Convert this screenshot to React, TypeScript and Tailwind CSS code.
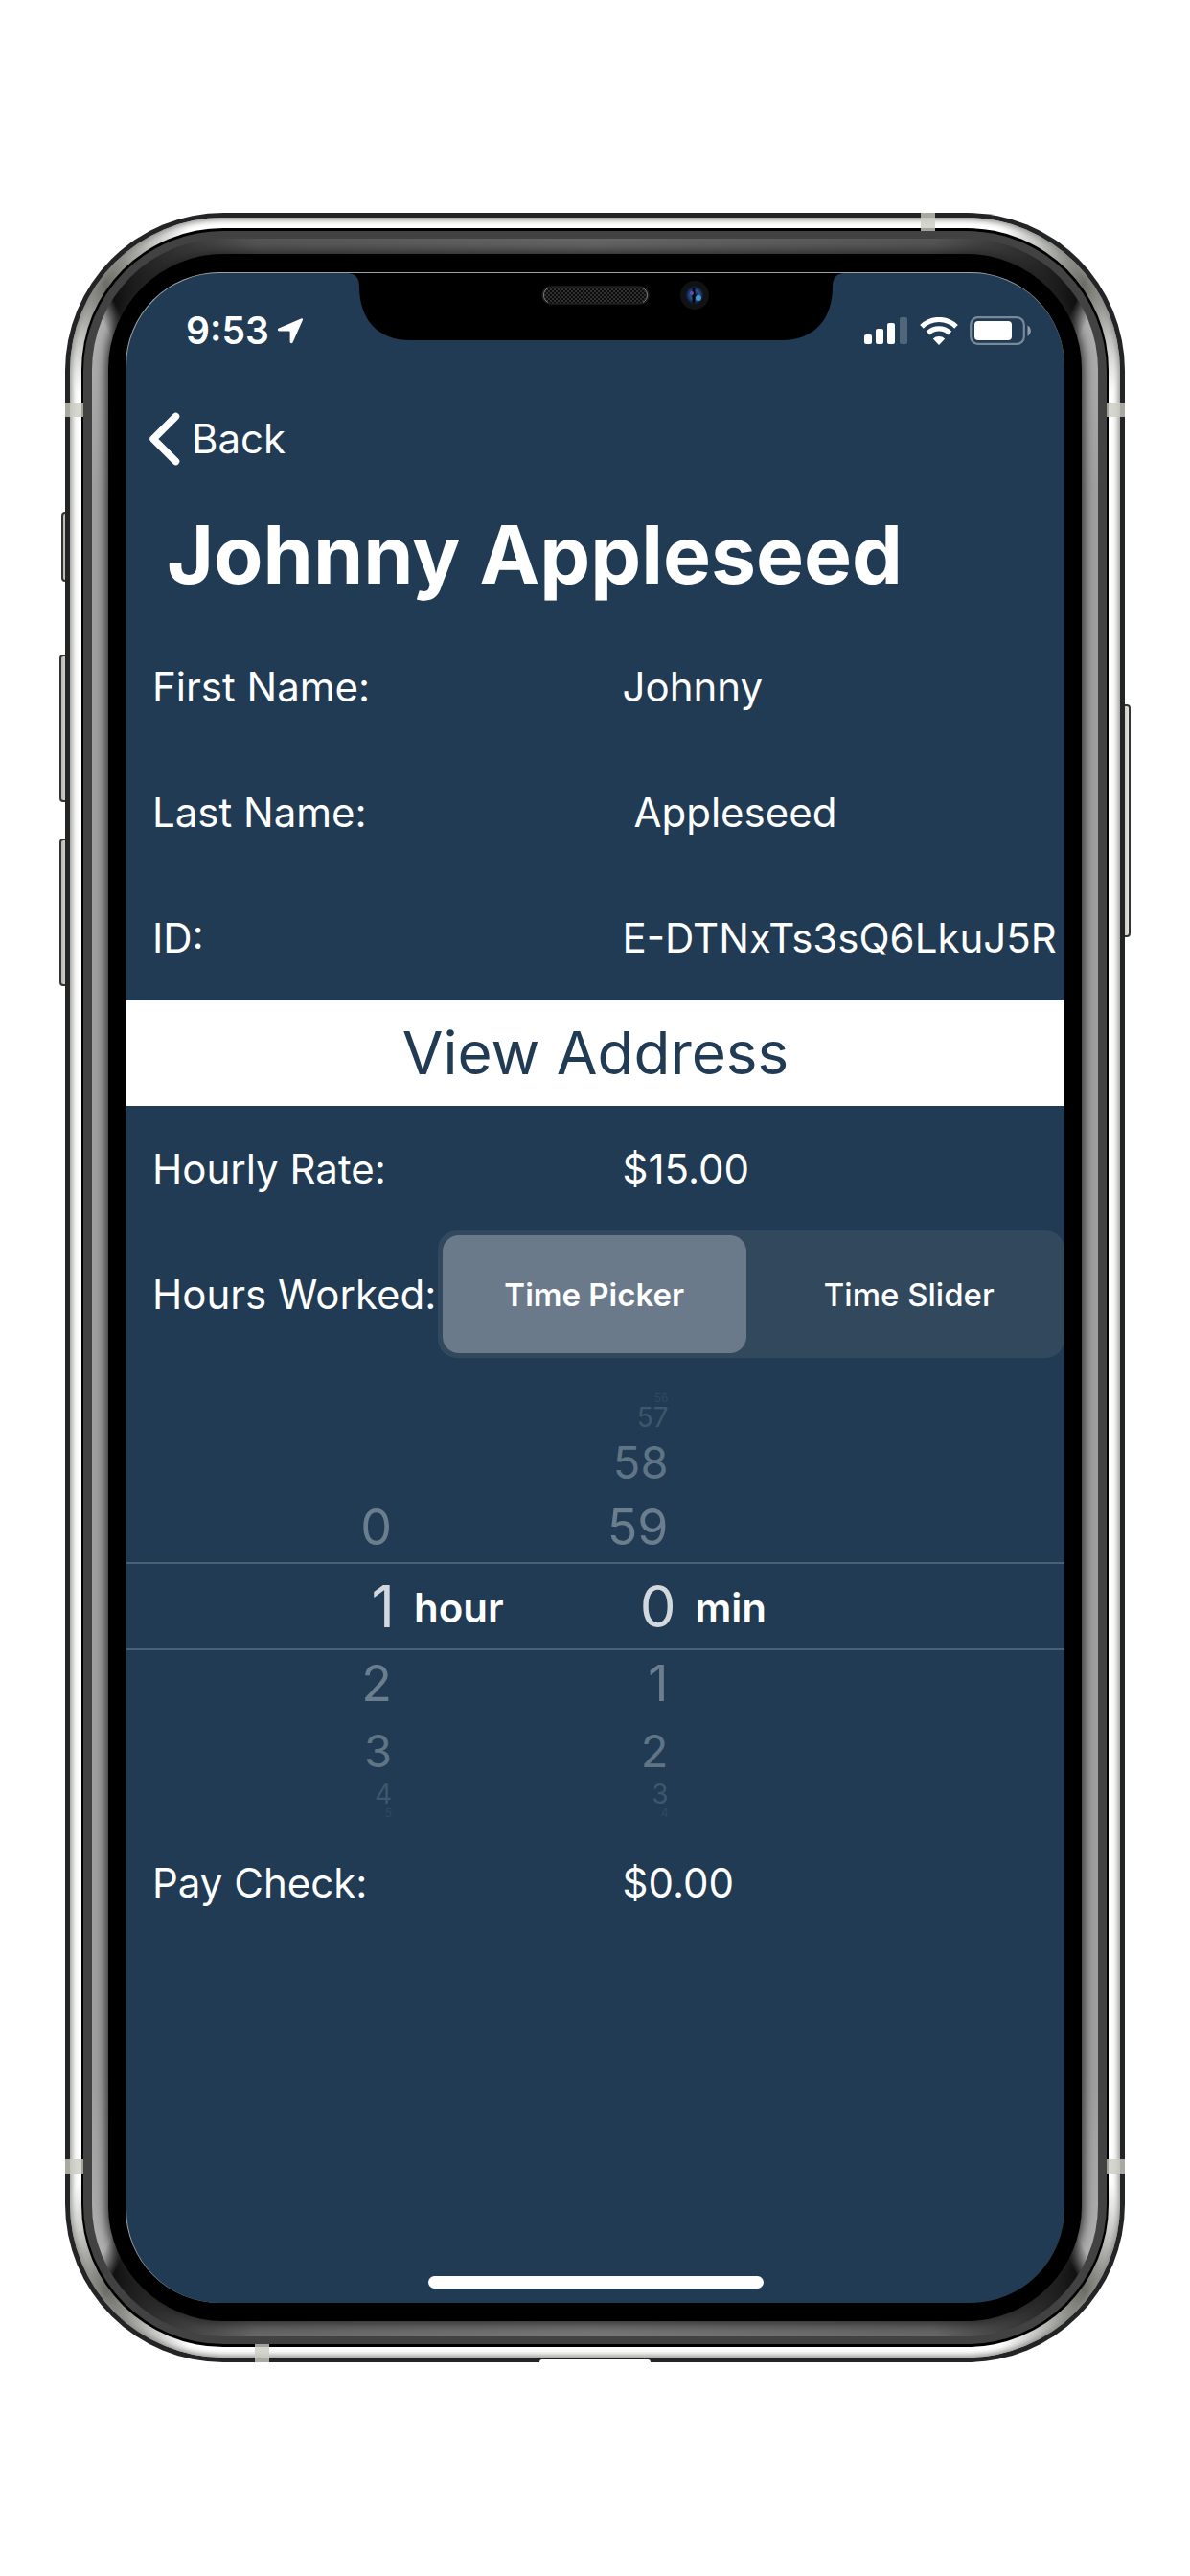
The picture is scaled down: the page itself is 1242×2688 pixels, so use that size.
import React, { useState } from "react";

const FONT = "font-['Inter','Liberation_Sans',sans-serif]";

function LocationArrow() {
  return (
    <svg width="28" height="28" viewBox="0 0 28 28" fill="#fff" aria-hidden="true">
      <path d="M25.2 1.400C26.600.800 27.500 1.700 26.900 3L16.600 26.200c-.7 1.600-3 1.200-3-.6V15.300c0-.6-.3-.9-.9-.9H2.500c-1.800 0-2.200-2.200-.6-2.900z" />
    </svg>
  );
}

function SignalBars() {
  return (
    <svg width="46" height="28" viewBox="0 0 46 28" fill="#fff" aria-hidden="true">
      <rect x="0" y="18" width="8" height="10" rx="2" />
      <rect x="12" y="12" width="8" height="16" rx="2" />
      <rect x="24" y="6" width="8" height="22" rx="2" />
      <rect x="37" y="0" width="8" height="28" rx="2" fillOpacity=".22" />
    </svg>
  );
}

function WifiGlyph() {
  return (
    <svg width="40" height="29" viewBox="0 0 40 29" aria-hidden="true">
      <g fill="none" stroke="#fff" strokeWidth="5.2">
        <path d="M2 9.8a25.8 25.8 0 0 1 36 0" />
        <path d="M8.6 16.6a16.2 16.2 0 0 1 22.800 0" />
      </g>
      <path d="M20 29l-6.200-6.400a9 9 0 0 1 12.400 0z" fill="#fff" />
    </svg>
  );
}

function Battery() {
  return (
    <svg width="65" height="30" viewBox="0 0 65 30" aria-hidden="true">
      <rect x="1.2" y="1.2" width="55.6" height="27.6" rx="7.5" fill="none" stroke="#fff" strokeOpacity=".4" strokeWidth="2.2" />
      <rect x="5" y="5" width="39" height="20" rx="4" fill="#fff" />
      <path d="M60.5 9.5c4.4 2.2 4.4 9 0 11.2z" fill="#fff" fillOpacity=".5" />
    </svg>
  );
}

function Notch() {
  return (
    <svg className="absolute top-0 left-1/2 -translate-x-1/2" width="520" height="72" viewBox="0 0 520 72" aria-hidden="true">
      <defs>
        <pattern id="mesh" width="4" height="4" patternUnits="userSpaceOnUse">
          <rect width="4" height="4" fill="#0c0c0c" />
          <rect width="2" height="2" fill="#303030" />
          <rect x="2" y="2" width="2" height="2" fill="#303030" />
        </pattern>
        <radialGradient id="lens">
          <stop offset="0" stopColor="#0a0f2a" />
          <stop offset=".5" stopColor="#29528f" />
          <stop offset="1" stopColor="#0a1128" />
        </radialGradient>
      </defs>
      <path d="M0 0c9 0 13 5 13 14 0 34 19 56 53 56h388c34 0 53-22 53-56 0-9 4-14 13-14z" fill="#000" />
      <rect x="204" y="14" width="111" height="18" rx="9" fill="url(#mesh)" stroke="#1c1c1c" strokeWidth="1.5" />
      <path d="M210 15.500a8.500 8.500 0 0 0 0 15M309 15.500a8.500 8.500 0 0 1 0 15" fill="none" stroke="#777" strokeWidth="1" />
      <circle cx="363" cy="23" r="15" fill="#111214" />
      <circle cx="363" cy="23" r="9.500" fill="url(#lens)" />
      <path d="M362 15v16" stroke="#05070f" strokeWidth="3" />
      <circle cx="360" cy="21" r="2" fill="#6a4bb0" />
      <circle cx="367" cy="26" r="3" fill="#4b93c4" />
    </svg>
  );
}

function StatusBar() {
  return (
    <div className="flex h-30 items-center justify-between pr-[34px] pl-[62px]">
      <div className="flex items-center gap-2">
        <span className="text-[39px] leading-[48px] font-semibold">9:53</span>
        <LocationArrow />
      </div>
      <div className="flex items-center gap-3">
        <SignalBars />
        <WifiGlyph />
        <Battery />
      </div>
    </div>
  );
}

function Field({ label, value, indent }: { label: string; value: string; indent?: boolean }) {
  return (
    <div className="grid h-[131px] grid-cols-2 items-center text-[42px] leading-[52px]">
      <dt className="pl-[27px]">{label}</dt>
      <dd className={indent ? "min-w-0 overflow-hidden pl-[40px] whitespace-nowrap" : "min-w-0 overflow-hidden pl-[28px] whitespace-nowrap"}>
        {value}
      </dd>
    </div>
  );
}

const ROWS = [
  "h-[14px] text-[12px] text-[#2f4a60]",
  "h-[26px] text-[28px] text-[#3d576b]",
  "h-[66px] text-[47px] text-[#5f7485]",
  "h-[72px] text-[52px] text-[#6b7e8d]",
  "h-[91px] text-[60px] text-[#d3d8de]",
  "h-[72px] text-[52px] text-[#6b7e8d]",
  "h-[66px] text-[47px] text-[#5f7485]",
  "h-[26px] text-[28px] text-[#3d576b]",
  "h-[14px] text-[12px] text-[#2f4a60]",
];

function Wheel({ values, unit, cell, inset }: { values: string[]; unit: string; cell: string; inset: string }) {
  return (
    <ul className="w-1/2" aria-label={unit}>
      {values.map((v, i) => (
        <li key={i} className={"flex items-center " + ROWS[i]}>
          <span className={"text-right leading-none " + cell + (i === 4 ? "" : inset)}>{v}</span>
          {i === 4 && <span className="pt-1 pl-5 text-[42px] leading-[52px] font-semibold text-white">{unit}</span>}
        </li>
      ))}
    </ul>
  );
}

function Segments() {
  const [mode, setMode] = useState("Time Picker");
  return (
    <fieldset className="grid h-[133px] flex-1 grid-cols-2 rounded-[20px] bg-[#32485c] py-[5px] pl-[5px]" aria-label="Time entry">
      {["Time Picker", "Time Slider"].map((name, i) => (
        <label
          key={name}
          className={
            "flex items-center justify-center rounded-[17px] text-[33px] leading-[44px] whitespace-nowrap " +
            (i === 0 ? "mr-2 " : "") +
            (mode === name ? "bg-[#6a7a8a] font-semibold" : "font-medium")
          }
        >
          <input type="radio" name="mode" className="sr-only" checked={mode === name} onChange={() => setMode(name)} />
          {name}
        </label>
      ))}
    </fieldset>
  );
}

function Screen() {
  return (
    <div className="relative overflow-hidden rounded-[98px] border-t border-l border-[#9da3a5] bg-[#203b53] text-white">
      <Notch />
      <StatusBar />
      <nav className="flex h-[106px] items-center pl-[23px]">
        <button className="flex items-center gap-3 text-[42px] leading-[52px]">
          <svg width="33" height="56" viewBox="0 0 33 56" fill="none" stroke="#fff" strokeWidth="7.500" strokeLinecap="round" strokeLinejoin="round" aria-hidden="true">
            <path d="M28.500 4.500L5 28l23.500 23.500" />
          </svg>
          Back
        </button>
      </nav>
      <h1 className="h-[140px] pt-4 pl-[42px] text-[84px] leading-[104px] font-bold whitespace-nowrap">Johnny Appleseed</h1>
      <dl>
        <Field label="First Name:" value="Johnny" />
        <Field label="Last Name:" value="Appleseed" indent />
        <Field label="ID:" value="E-DTNxTs3sQ6LkuJ5R" />
      </dl>
      <button className="block h-[110px] w-full bg-white text-[62px] leading-[80px] text-[#203b53]">View Address</button>
      <dl>
        <Field label="Hourly Rate:" value="$15.00" />
      </dl>
      <div className="flex h-[131px] items-center">
        <span className="w-[325px] pl-[27px] text-[42px] leading-[52px] whitespace-nowrap">Hours Worked:</span>
        <Segments />
      </div>
      <div className="relative flex pt-9">
        <div className="pointer-events-none absolute inset-x-0 top-[214px] h-[92px] border-y-2 border-[#486174]" />
        <Wheel values={["", "", "", "0", "1", "2", "3", "4", "5"]} unit="hour" cell="w-[280px]" inset=" pr-[3px]" />
        <Wheel values={["56", "57", "58", "59", "0", "1", "2", "3", "4"]} unit="min" cell="w-[84px]" inset=" pr-2" />
      </div>
      <dl>
        <Field label="Pay Check:" value="$0.00" />
      </dl>
      <div className="mt-[345px] flex justify-center pb-[15px]">
        <div className="h-[13px] w-[350px] rounded-full bg-white" />
      </div>
    </div>
  );
}

const BAND = "absolute bg-[#cbccc2]/80";
const SIDE_KEY = "absolute border-2 border-[#333331] bg-linear-to-r from-[#b9b8b2] to-[#e4e4df]";

export default function App() {
  return (
    <div className={"min-h-screen bg-white px-[68px] py-[222px] " + FONT}>
      <div className="relative">
        <div className={SIDE_KEY + " top-[312px] -left-1 h-[73px] w-3 rounded-sm"} />
        <div className={SIDE_KEY + " top-[461px] -left-[6px] h-[154px] w-3 rounded-sm"} />
        <div className={SIDE_KEY + " top-[653px] -left-[6px] h-[154px] w-3 rounded-sm"} />
        <div className={SIDE_KEY + " top-[513px] -right-[6px] h-[243px] w-3 rounded-sm"} />
        <div className="relative overflow-hidden rounded-[165px] bg-[#222425] p-[5px]">
          <div className="rounded-[160px] bg-[conic-gradient(#fff_0deg,#fff_21deg,#6c6c66_26deg,#fff_30deg,#fff_150deg,#6c6c66_154deg,#fff_159deg,#fff_201deg,#6c6c66_206deg,#fff_210deg,#fff_330deg,#6c6c66_334deg,#fff_339deg,#fff_360deg)] px-3 py-[11px] shadow-[inset_0_0_6px_2px_#8a8a86]">
            <div className="rounded-[148px] bg-black px-[2px] py-[3px]">
              <div className="rounded-[146px] bg-[#424242] px-[9px] py-2">
                <div className="rounded-[137px] bg-[conic-gradient(#666_0deg,#555_18deg,#111_26deg,#b0b0b0_27deg,#a0a0a0_32deg,#a0a0a0_148deg,#b0b0b0_153deg,#111_154deg,#666_162deg,#777_180deg,#666_198deg,#111_206deg,#b0b0b0_207deg,#a0a0a0_212deg,#a0a0a0_328deg,#b0b0b0_333deg,#111_334deg,#555_342deg,#666_360deg)] px-[17px] py-4">
                  <div className="rounded-[120px] bg-black px-[18px] py-[19px] shadow-[0_0_12px_2px_#222]">
                    <Screen />
                  </div>
                </div>
              </div>
            </div>
          </div>
          <div className={BAND + " top-[198px] left-0 h-[15px] w-[19px]"} />
          <div className={BAND + " top-[198px] right-0 h-[15px] w-[19px]"} />
          <div className={BAND + " bottom-[197px] left-0 h-[15px] w-[19px]"} />
          <div className={BAND + " right-0 bottom-[197px] h-[15px] w-[19px]"} />
          <div className={BAND + " top-0 right-[198px] h-[19px] w-[15px]"} />
          <div className={BAND + " bottom-0 left-[198px] h-[19px] w-[15px]"} />
          <div className="absolute bottom-0 left-1/2 h-[3px] w-[116px] -translate-x-1/2 rounded-t-full bg-white" />
        </div>
      </div>
    </div>
  );
}
